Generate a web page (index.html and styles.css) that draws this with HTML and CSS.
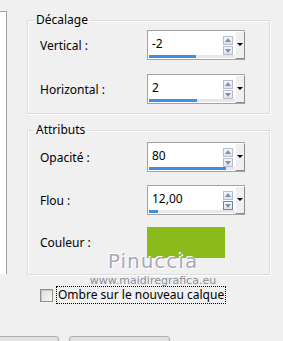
FILE: index.html
```html
<!DOCTYPE html>
<html lang="fr">
<head>
<meta charset="utf-8">
<link rel="stylesheet" href="styles.css">
</head>
<body>
<div class="dialog">
  <div class="side"></div>
  <div class="main">
    <fieldset class="group g1">
      <legend>Décalage</legend>
      <div class="row">
        <span class="lbl">Vertical :</span>
        <div class="spin">
          <span class="val">-2</span>
          <div class="track"><div class="bar" style="width:47px"></div></div>
          <div class="arrows"><span class="ar up"></span><span class="ar down"></span></div>
          <div class="drop"></div>
        </div>
      </div>
      <div class="row r2">
        <span class="lbl">Horizontal :</span>
        <div class="spin">
          <span class="val">2</span>
          <div class="track"><div class="bar" style="width:48px"></div></div>
          <div class="arrows"><span class="ar up"></span><span class="ar down"></span></div>
          <div class="drop"></div>
        </div>
      </div>
    </fieldset>
    <fieldset class="group g2">
      <legend>Attributs</legend>
      <div class="row">
        <span class="lbl">Opacité :</span>
        <div class="spin">
          <span class="val">80</span>
          <div class="track"><div class="bar" style="width:77px"></div></div>
          <div class="arrows"><span class="ar up"></span><span class="ar down"></span></div>
          <div class="drop"></div>
        </div>
      </div>
      <div class="row r2b">
        <span class="lbl">Flou :</span>
        <div class="spin">
          <span class="val">12,00</span>
          <div class="track"><div class="bar" style="width:9px"></div></div>
          <div class="arrows"><span class="ar up"></span><span class="ar down focus"></span></div>
          <div class="drop"></div>
        </div>
      </div>
      <div class="row r3">
        <span class="lbl">Couleur :</span>
        <div class="swatch"></div>
      </div>
    </fieldset>
    <label class="check"><span class="box"></span><span class="ctext">Ombre sur le nouveau calque</span></label>
  </div>
</div>
<div class="buttons"><div class="btn b1"></div><div class="btn b2"></div></div>
<div class="watermark"><div class="wm1">Pinuccia</div><div class="wm2">www.maidiregrafica.eu</div></div>
</body>
</html>
```
FILE: styles.css
```css
html, body { margin: 0; padding: 0; }
body {
  width: 283px; height: 341px; overflow: hidden;
  background: #f0f0f0;
  font-family: "Noto Sans", "Open Sans", sans-serif;
  font-size: 12px; color: #000;
  position: relative;
}
.dialog { display: flex; align-items: flex-start; }
.side {
  width: 6px; height: 262px; margin-top: 11px;
  background: #fff;
  border-top: 1px solid #a0a0a0; border-right: 1px solid #a0a0a0;
}
.main { margin-left: 20px; margin-top: 12px; width: 243px; }
.group {
  margin: 0; padding: 0 0 0 12px;
  border: 1px solid #dcdcdc;
  box-shadow: inset 1px 1px 0 #fff, 1px 1px 0 #fff;
  min-width: 0;
}
.group legend {
  margin-left: -6px; padding: 0 2px;
  line-height: 16px; height: 16px;
}
.g1 { padding-top: 2px; padding-bottom: 9px; }
.g2 { margin-top: 8px; padding-top: 4px; padding-bottom: 16px; }
.row { display: flex; align-items: center; height: 30px; }
.r2 { margin-top: 14px; }
.r2b { margin-top: 13px; }
.r3 { margin-top: 12px; height: 31px; }
.lbl { width: 107px; flex: none; }
.spin {
  position: relative;
  width: 96px; height: 28px;
  background: #fff;
  border: 1px solid #a3a3a3;
}
.val { position: absolute; left: 4px; top: 5px; line-height: 16px; }
.track {
  position: absolute; left: 1px; bottom: 1px; width: 90px; height: 3px;
  background: #e8e8e8;
}
.bar { height: 3px; background: #3d8ee6; }
.arrows {
  position: absolute; left: 75px; top: 5px; width: 10px;
  display: flex; flex-direction: column; gap: 1px;
}
.ar {
  display: block; width: 8px; height: 7px;
  border: 1px solid #b7bccb;
  background: linear-gradient(#f4f6fa, #dfe4ee);
  position: relative;
}
.ar::after {
  content: ""; position: absolute; left: 1px;
  border-left: 3px solid transparent; border-right: 3px solid transparent;
}
.ar.up::after { top: 1px; border-bottom: 4px solid #7f8fb0; }
.ar.down::after { top: 2px; border-top: 4px solid #7f8fb0; }
.ar.focus { border-color: #6e86a8; }
.drop {
  position: absolute; left: 87px; top: 0; width: 8px; height: 26px;
  background: #f0f0f0;
  border-left: 1px solid #fff; border-top: 1px solid #fff;
  border-right: 1px solid #8a8a8a; border-bottom: 1px solid #8a8a8a;
}
.drop::after {
  content: ""; position: absolute; left: 1px; top: 11px;
  border-left: 3px solid transparent; border-right: 3px solid transparent;
  border-top: 3px solid #000;
}
.swatch { width: 78px; height: 31px; background: #8bbb1a; }
.check {
  display: flex; align-items: center; gap: 4px;
  margin-top: 12px; margin-left: 13px;
}
.box {
  width: 11px; height: 11px; flex: none;
  border: 1px solid #8f8f8f;
  background: linear-gradient(135deg, #dcdcdc, #f8f8f8);
  box-shadow: inset 1px 1px 0 #c8c8c8;
}
.ctext {
  outline: 1px dotted #000; outline-offset: 0;
  padding: 0 1px; line-height: 16px;
}
.buttons { position: absolute; left: 0; top: 336px; width: 283px; display: flex; }
.btn {
  height: 24px; background: #e1e1e1;
  border: 1px solid #adadad; border-radius: 3px;
}
.b1 { margin-left: -20px; width: 77px; }
.b2 { margin-left: 10px; width: 99px; }
.watermark {
  position: absolute; left: 80px; top: 250px; width: 146px;
  text-align: center; pointer-events: none;
}
.wm1 {
  font-family: "DejaVu Sans", sans-serif; font-size: 20px; line-height: 22px;
  color: #a8a8ba; letter-spacing: 1px;
  text-shadow: 1px 1px 0 #fff, -1px -1px 0 #fff;
}
.wm2 {
  font-family: "DejaVu Sans", sans-serif; font-size: 11px; line-height: 12px;
  color: #8c8c96; margin-top: 3px;
}
```
